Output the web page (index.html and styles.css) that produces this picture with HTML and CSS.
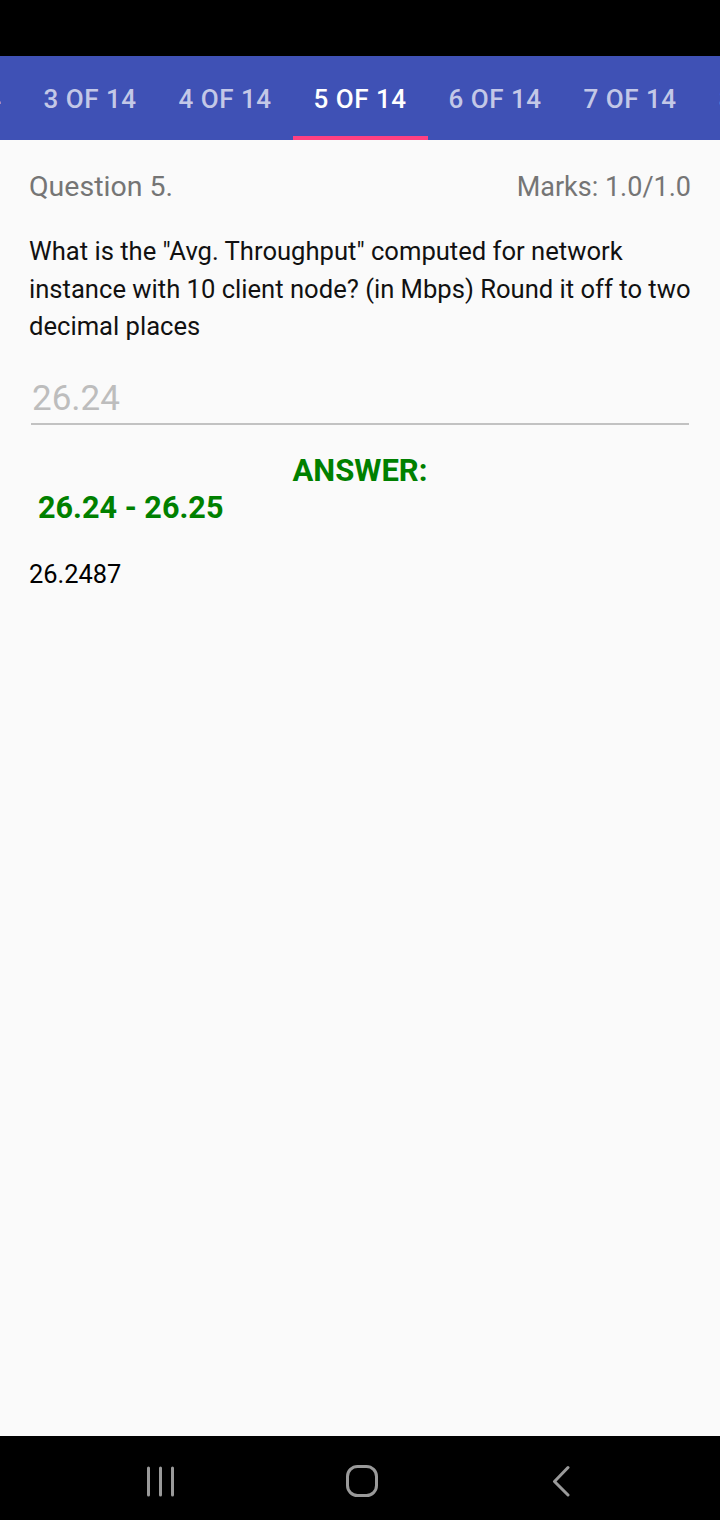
FILE: index.html
```html
<!DOCTYPE html>
<html>
<head>
<meta charset="utf-8">
<link rel="stylesheet" href="styles.css">
</head>
<body>
<div class="screen">
  <div class="statusbar"></div>
  <div class="tabs">
    <div class="tab">2 OF 14</div>
    <div class="tab">3 OF 14</div>
    <div class="tab">4 OF 14</div>
    <div class="tab active">5 OF 14</div>
    <div class="tab">6 OF 14</div>
    <div class="tab">7 OF 14</div>
    <div class="tab">8 OF 14</div>
  </div>
  <main class="content">
    <div class="qhead">
      <span class="qnum">Question 5.</span>
      <span class="marks">Marks: 1.0/1.0</span>
    </div>
    <p class="qtext">What is the "Avg. Throughput" computed for network instance with 10 client node? (in Mbps) Round it off to two decimal places</p>
    <div class="field">26.24</div>
    <div class="answer-label">ANSWER:</div>
    <div class="answer-range">26.24 - 26.25</div>
    <div class="answer-exact">26.2487</div>
  </main>
  <nav class="navbar">
    <svg class="nav-icon" width="30" height="32" viewBox="0 0 30 32">
      <path d="M2.5 3v27M14.5 3v27M26.5 3v27" stroke="#9a9a9a" stroke-width="3" stroke-linecap="round" fill="none"/>
    </svg>
    <svg class="nav-icon" width="34" height="34" viewBox="0 0 34 34">
      <rect x="2.5" y="2.5" width="29" height="29" rx="10" stroke="#9a9a9a" stroke-width="3" fill="none"/>
    </svg>
    <svg class="nav-icon" width="24" height="32" viewBox="0 0 24 32">
      <path d="M20 2.5L6.5 16.5L20 30" stroke="#9a9a9a" stroke-width="3" stroke-linecap="round" stroke-linejoin="round" fill="none"/>
    </svg>
  </nav>
</div>
</body>
</html>
```
FILE: styles.css
```css
* { box-sizing: border-box; }
html, body { margin: 0; padding: 0; }
body {
  width: 720px;
  height: 1520px;
  overflow: hidden;
  font-family: Roboto, "Noto Sans", sans-serif;
  background: #fafafa;
}
.screen {
  display: flex;
  flex-direction: column;
  height: 1520px;
}
.statusbar {
  height: 56px;
  background: #000;
  flex: none;
}
.tabs {
  height: 84px;
  background: #3f51b5;
  display: flex;
  justify-content: center;
  flex: none;
  overflow: hidden;
}
.tab {
  flex: none;
  width: 135px;
  display: flex;
  align-items: center;
  justify-content: center;
  color: rgba(255,255,255,0.7);
  font-size: 26px;
  font-weight: 500;
  letter-spacing: 0.5px;
  border-bottom: 4px solid transparent;
  padding-top: 5px;
}
.tab.active {
  color: #fff;
  border-bottom-color: #ff4081;
}
.content {
  flex: 1;
  padding: 0 29px;
}
.qhead {
  display: flex;
  justify-content: space-between;
  align-items: baseline;
  margin-top: 30px;
  height: 33px;
  color: #757575;
}
.qnum { font-size: 28.5px; }
.marks { font-size: 27px; }
.qtext {
  margin: 30px 0 0 0;
  font-size: 25.6px;
  line-height: 37.5px;
  color: #111;
}
.field {
  margin: 32px 2px 0 2px;
  height: 47px;
  font-size: 35px;
  line-height: 41px;
  color: #bdbdbd;
  padding: 0 0 4px 1px;
  border-bottom: 2px solid #c2c2c2;
}
.answer-label {
  margin-top: 28.5px;
  height: 36px;
  line-height: 36px;
  text-align: center;
  color: #008000;
  font-weight: 700;
  font-size: 31px;
}
.answer-range {
  margin-top: 1px;
  height: 36px;
  line-height: 36px;
  padding-left: 9px;
  color: #008000;
  font-weight: 700;
  font-size: 30.6px;
}
.answer-exact {
  margin-top: 33px;
  line-height: 30px;
  font-size: 25.4px;
  color: #000;
}
.navbar {
  height: 84px;
  background: #000;
  flex: none;
  display: flex;
  align-items: center;
  justify-content: space-between;
  padding: 6px 148px 0 146px;
}
.nav-icon { display: block; }
```
